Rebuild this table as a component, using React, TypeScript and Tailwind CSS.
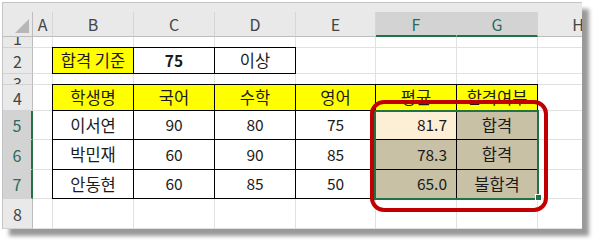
import React from 'react';

type Cell = {
  t?: string;
  fill?: 'y' | 'active' | 'sel';
  border?: boolean;
  bold?: boolean;
  right?: boolean;
  ko?: boolean;
};

const E: Cell = {};

const row = (b: Cell, c: Cell, d: Cell, e: Cell, f: Cell, g: Cell): Cell[] => [E, b, c, d, e, f, g, E];

const sheetRows: { n: number; sel?: boolean; tiny?: 'up' | 'down'; cells: Cell[] }[] = [
  { n: 1, tiny: 'up', cells: row(E, E, E, E, E, E) },
  {
    n: 2,
    cells: row(
      { t: '합격 기준', fill: 'y', border: true, ko: true },
      { t: '75', border: true, bold: true },
      { t: '이상', border: true, ko: true },
      E,
      E,
      E
    ),
  },
  { n: 3, tiny: 'down', cells: row(E, E, E, E, E, E) },
  {
    n: 4,
    cells: row(
      { t: '학생명', fill: 'y', border: true, ko: true },
      { t: '국어', fill: 'y', border: true, ko: true },
      { t: '수학', fill: 'y', border: true, ko: true },
      { t: '영어', fill: 'y', border: true, ko: true },
      { t: '평균', fill: 'y', border: true, ko: true },
      { t: '합격여부', fill: 'y', border: true, ko: true }
    ),
  },
  {
    n: 5,
    sel: true,
    cells: row(
      { t: '이서연', border: true, ko: true },
      { t: '90', border: true },
      { t: '80', border: true },
      { t: '75', border: true },
      { t: '81.7', border: true, right: true, fill: 'active' },
      { t: '합격', border: true, ko: true, fill: 'sel' }
    ),
  },
  {
    n: 6,
    sel: true,
    cells: row(
      { t: '박민재', border: true, ko: true },
      { t: '60', border: true },
      { t: '90', border: true },
      { t: '85', border: true },
      { t: '78.3', border: true, right: true, fill: 'sel' },
      { t: '합격', border: true, ko: true, fill: 'sel' }
    ),
  },
  {
    n: 7,
    sel: true,
    cells: row(
      { t: '안동현', border: true, ko: true },
      { t: '60', border: true },
      { t: '85', border: true },
      { t: '50', border: true },
      { t: '65.0', border: true, right: true, fill: 'sel' },
      { t: '불합격', border: true, ko: true, fill: 'sel' }
    ),
  },
  { n: 8, cells: row(E, E, E, E, E, E) },
];

const columns = ['A', 'B', 'C', 'D', 'E', 'F', 'G', 'H'];

const fillClass = {
  y: 'bg-[#ffff00]',
  active: 'bg-[#fcefd6]',
  sel: 'bg-[#c9c1a5]',
};

const SheetCell: React.FC<{ cell: Cell }> = ({ cell }) => {
  const edges = cell.border
    ? 'relative -ml-px -mt-px border border-black'
    : 'border-r border-b border-[#e1e1e1]';
  const bg = cell.fill ? fillClass[cell.fill] : 'bg-white';
  return (
    <div
      className={`flex items-center overflow-hidden whitespace-nowrap leading-none text-[#1b1b1b] ${edges} ${bg} ${
        cell.right ? 'justify-end pr-[9px]' : 'justify-center'
      } ${cell.ko ? 'text-[16.5px]' : 'text-[15.5px]'} ${cell.bold ? 'font-bold' : ''}`}
    >
      {cell.t}
    </div>
  );
};

const App: React.FC = () => {
  return (
    <div className="w-[600px] h-[246px] bg-white pl-[2px] pt-[2px] font-['Noto_Sans_CJK_KR','Noto_Sans',sans-serif]">
      <div className="relative w-[580px] h-[227px] shadow-[7px_7px_4px_rgba(0,0,0,0.4)]">
        <div className="w-full h-full overflow-hidden border-l border-t border-[#c4c4c4] bg-white">
          <div className="grid grid-cols-[30px_20px_81px_81px_81px_80px_81px_81px_81px] grid-rows-[9px_25px_11px_26px_11px_26px_29px_30px_29px_30px] w-[616px]">
            {/* strip above the column letters */}
            <div className="col-span-9 bg-[#e9e9e9]" />

            {/* corner cell */}
            <div className="relative bg-[#e9e9e9] border-r border-b border-[#bdbdbd]">
              <svg className="absolute right-[3px] bottom-[3px]" width="14" height="14" viewBox="0 0 14 14">
                <polygon points="14,0 14,14 0,14" fill="#b7b7b7" />
              </svg>
            </div>

            {columns.map((col) => {
              const sel = col === 'F' || col === 'G';
              return (
                <div
                  key={col}
                  className={`flex items-center justify-center text-[16px] leading-none border-r ${
                    sel
                      ? 'bg-[#d3d3d3] border-[#d3d3d3] border-b-2 border-b-[#217346] text-[#2a6a5c]'
                      : 'bg-[#e9e9e9] border-[#d6d6d6] border-b border-b-[#bdbdbd] text-[#444444]'
                  }`}
                >
                  {col}
                </div>
              );
            })}

            {sheetRows.map((r) => (
              <React.Fragment key={r.n}>
                <div
                  className={`flex justify-center overflow-hidden text-[16px] leading-none border-b border-b-[#d2d2d2] ${
                    r.tiny === 'up' ? 'items-start' : r.tiny === 'down' ? 'items-start' : 'items-center'
                  } ${
                    r.sel
                      ? 'bg-[#d3d3d3] border-r-2 border-r-[#217346] text-[#2a6a5c]'
                      : 'bg-[#e9e9e9] border-r border-r-[#bdbdbd] text-[#444444]'
                  }`}
                >
                  <span className={r.tiny === 'up' ? '-mt-[7px]' : r.tiny === 'down' ? 'mt-[1px]' : ''}>{r.n}</span>
                </div>
                {r.cells.map((c, i) => (
                  <SheetCell key={i} cell={c} />
                ))}
              </React.Fragment>
            ))}
          </div>
        </div>

        {/* selection F5:G7 */}
        <div className="absolute left-[372px] top-[108px] w-[165px] h-[90px] border-2 border-[#217346]" />
        <div className="absolute left-[533px] top-[192px] w-[7px] h-[7px] bg-[#217346] border border-white" />

        {/* red highlight */}
        <div className="absolute left-[368px] top-[98px] w-[178px] h-[112px] border-4 border-[#c00000] rounded-[14px]" />
      </div>
    </div>
  );
};

export default App;
